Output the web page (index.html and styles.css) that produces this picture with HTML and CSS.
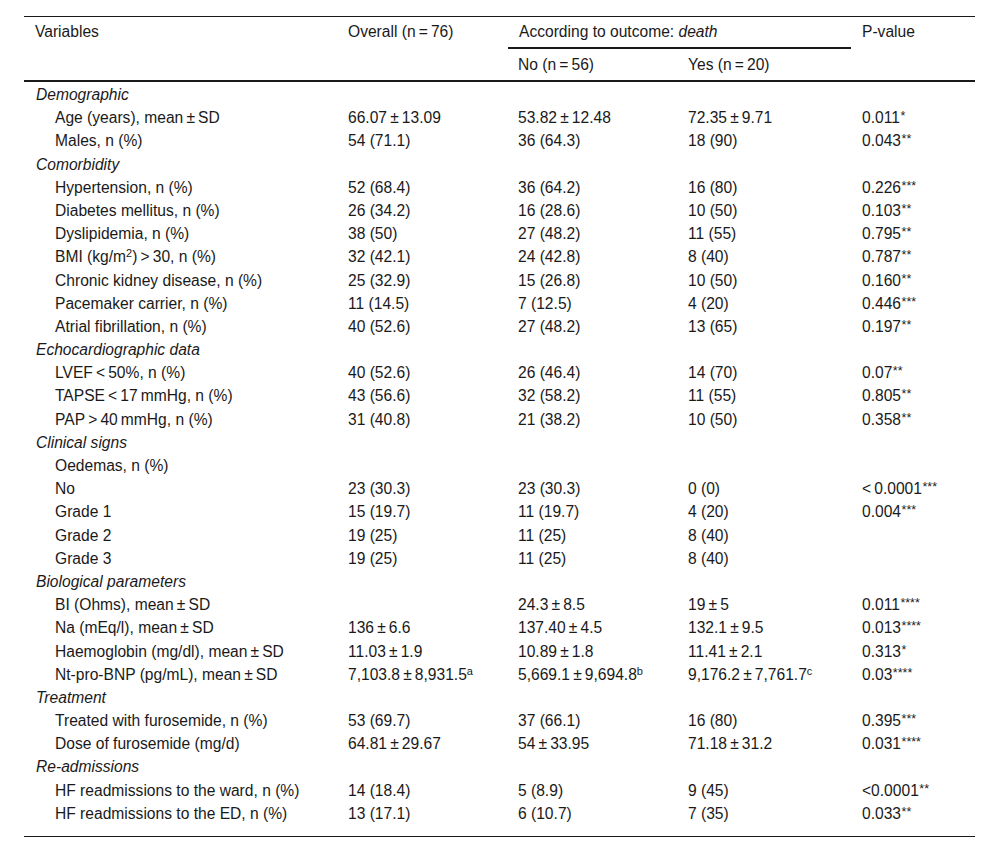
FILE: index.html
```html
<!DOCTYPE html>
<html lang="en">
<head>
<meta charset="utf-8">
<title>Table</title>
<link rel="stylesheet" href="styles.css">
</head>
<body>
<table class="data">
  <colgroup>
    <col class="c-var">
    <col class="c-all">
    <col class="c-no">
    <col class="c-yes">
    <col class="c-p">
  </colgroup>
  <thead>
    <tr class="h1">
      <th rowspan="2">Variables</th>
      <th rowspan="2">Overall (n&thinsp;=&thinsp;76)</th>
      <th colspan="2" class="span"><span class="span-label">According to outcome: <em>death</em></span></th>
      <th rowspan="2">P-value</th>
    </tr>
    <tr class="h2">
      <th>No (n&thinsp;=&thinsp;56)</th>
      <th>Yes (n&thinsp;=&thinsp;20)</th>
    </tr>
  </thead>
  <tbody>
    <tr class="cat first"><td colspan="5">Demographic</td></tr>
    <tr><td class="item">Age (years), mean&thinsp;±&thinsp;SD</td><td>66.07&thinsp;±&thinsp;13.09</td><td>53.82&thinsp;±&thinsp;12.48</td><td>72.35&thinsp;±&thinsp;9.71</td><td>0.011<span class="ast">*</span></td></tr>
    <tr><td class="item">Males, n (%)</td><td>54 (71.1)</td><td>36 (64.3)</td><td>18 (90)</td><td>0.043<span class="ast">**</span></td></tr>
    <tr class="cat"><td colspan="5">Comorbidity</td></tr>
    <tr><td class="item">Hypertension, n (%)</td><td>52 (68.4)</td><td>36 (64.2)</td><td>16 (80)</td><td>0.226<span class="ast">***</span></td></tr>
    <tr><td class="item">Diabetes mellitus, n (%)</td><td>26 (34.2)</td><td>16 (28.6)</td><td>10 (50)</td><td>0.103<span class="ast">**</span></td></tr>
    <tr><td class="item">Dyslipidemia, n (%)</td><td>38 (50)</td><td>27 (48.2)</td><td>11 (55)</td><td>0.795<span class="ast">**</span></td></tr>
    <tr><td class="item">BMI (kg/m<sup class="num">2</sup>)&thinsp;&gt;&thinsp;30, n (%)</td><td>32 (42.1)</td><td>24 (42.8)</td><td>8 (40)</td><td>0.787<span class="ast">**</span></td></tr>
    <tr><td class="item">Chronic kidney disease, n (%)</td><td>25 (32.9)</td><td>15 (26.8)</td><td>10 (50)</td><td>0.160<span class="ast">**</span></td></tr>
    <tr><td class="item">Pacemaker carrier, n (%)</td><td>11 (14.5)</td><td>7 (12.5)</td><td>4 (20)</td><td>0.446<span class="ast">***</span></td></tr>
    <tr><td class="item">Atrial fibrillation, n (%)</td><td>40 (52.6)</td><td>27 (48.2)</td><td>13 (65)</td><td>0.197<span class="ast">**</span></td></tr>
    <tr class="cat"><td colspan="5">Echocardiographic data</td></tr>
    <tr><td class="item">LVEF&thinsp;&lt;&thinsp;50%, n (%)</td><td>40 (52.6)</td><td>26 (46.4)</td><td>14 (70)</td><td>0.07<span class="ast">**</span></td></tr>
    <tr><td class="item">TAPSE&thinsp;&lt;&thinsp;17&thinsp;mmHg, n (%)</td><td>43 (56.6)</td><td>32 (58.2)</td><td>11 (55)</td><td>0.805<span class="ast">**</span></td></tr>
    <tr><td class="item">PAP&thinsp;&gt;&thinsp;40&thinsp;mmHg, n (%)</td><td>31 (40.8)</td><td>21 (38.2)</td><td>10 (50)</td><td>0.358<span class="ast">**</span></td></tr>
    <tr class="cat"><td colspan="5">Clinical signs</td></tr>
    <tr><td class="item">Oedemas, n (%)</td><td></td><td></td><td></td><td></td></tr>
    <tr><td class="item">No</td><td>23 (30.3)</td><td>23 (30.3)</td><td>0 (0)</td><td>&lt;&thinsp;0.0001<span class="ast">***</span></td></tr>
    <tr><td class="item">Grade 1</td><td>15 (19.7)</td><td>11 (19.7)</td><td>4 (20)</td><td>0.004<span class="ast">***</span></td></tr>
    <tr><td class="item">Grade 2</td><td>19 (25)</td><td>11 (25)</td><td>8 (40)</td><td></td></tr>
    <tr><td class="item">Grade 3</td><td>19 (25)</td><td>11 (25)</td><td>8 (40)</td><td></td></tr>
    <tr class="cat"><td colspan="5">Biological parameters</td></tr>
    <tr><td class="item">BI (Ohms), mean&thinsp;±&thinsp;SD</td><td></td><td>24.3&thinsp;±&thinsp;8.5</td><td>19&thinsp;±&thinsp;5</td><td>0.011<span class="ast">****</span></td></tr>
    <tr><td class="item">Na (mEq/l), mean&thinsp;±&thinsp;SD</td><td>136&thinsp;±&thinsp;6.6</td><td>137.40&thinsp;±&thinsp;4.5</td><td>132.1&thinsp;±&thinsp;9.5</td><td>0.013<span class="ast">****</span></td></tr>
    <tr><td class="item">Haemoglobin (mg/dl), mean&thinsp;±&thinsp;SD</td><td>11.03&thinsp;±&thinsp;1.9</td><td>10.89&thinsp;±&thinsp;1.8</td><td>11.41&thinsp;±&thinsp;2.1</td><td>0.313<span class="ast">*</span></td></tr>
    <tr><td class="item">Nt-pro-BNP (pg/mL), mean&thinsp;±&thinsp;SD</td><td>7,103.8&thinsp;±&thinsp;8,931.5<sup class="num">a</sup></td><td>5,669.1&thinsp;±&thinsp;9,694.8<sup class="num">b</sup></td><td>9,176.2&thinsp;±&thinsp;7,761.7<sup class="num">c</sup></td><td>0.03<span class="ast">****</span></td></tr>
    <tr class="cat"><td colspan="5">Treatment</td></tr>
    <tr><td class="item">Treated with furosemide, n (%)</td><td>53 (69.7)</td><td>37 (66.1)</td><td>16 (80)</td><td>0.395<span class="ast">***</span></td></tr>
    <tr><td class="item">Dose of furosemide (mg/d)</td><td>64.81&thinsp;±&thinsp;29.67</td><td>54&thinsp;±&thinsp;33.95</td><td>71.18&thinsp;±&thinsp;31.2</td><td>0.031<span class="ast">****</span></td></tr>
    <tr class="cat"><td colspan="5">Re-admissions</td></tr>
    <tr><td class="item">HF readmissions to the ward, n (%)</td><td>14 (18.4)</td><td>5 (8.9)</td><td>9 (45)</td><td>&lt;0.0001<span class="ast">**</span></td></tr>
    <tr class="last"><td class="item">HF readmissions to the ED, n (%)</td><td>13 (17.1)</td><td>6 (10.7)</td><td>7 (35)</td><td>0.033<span class="ast">**</span></td></tr>
  </tbody>
</table>
</body>
</html>
```
FILE: styles.css
```css
html, body {
  margin: 0;
  padding: 0;
  background: #ffffff;
}
body {
  padding: 16px 25px 0 24px;
  font-family: "Liberation Sans", Arial, Helvetica, sans-serif;
  font-size: 15.6px;
  color: #1a1a1a;
}
.data {
  width: 951px;
  border-collapse: collapse;
  table-layout: fixed;
}
.c-var { width: 313px; }
.c-all { width: 170px; }
.c-no { width: 170px; }
.c-yes { width: 174px; }
.c-p { width: 124px; }

.data th {
  font-weight: normal;
  text-align: left;
  vertical-align: top;
  padding: 5px 11px 0 11px;
  line-height: 19px;
}
.data thead tr.h1 th {
  border-top: 1px solid #1a1a1a;
  height: 26px;
}
.data thead tr.h1 th[rowspan] {
  border-bottom: 2px solid #1a1a1a;
}
.data thead tr.h1 th.span {
  padding: 5px 0 0 0;
}
.span-label {
  display: block;
  padding: 0 0 6px 11px;
  margin-left: 1px;
  border-bottom: 2px solid #1a1a1a;
}
.data thead tr.h2 th {
  border-bottom: 2px solid #1a1a1a;
  height: 25px;
  padding-top: 6px;
}
.data td {
  padding: 2px 11px 2.2px 11px;
  line-height: 19px;
  white-space: nowrap;
  vertical-align: top;
}
.data tr.first td {
  padding-top: 3px;
}
.data tr.cat td {
  font-style: italic;
  padding-left: 12px;
}
.data td.item {
  padding-left: 31px;
}
.data tr.last td {
  border-bottom: 1px solid #1a1a1a;
  padding-bottom: 13px;
}
.ast {
  font-size: 12.5px;
  line-height: 0;
  vertical-align: 3px;
  margin-left: 0.5px;
}
sup.num {
  font-size: 11px;
  line-height: 0;
  vertical-align: 5px;
}
em {
  font-style: italic;
}
```
